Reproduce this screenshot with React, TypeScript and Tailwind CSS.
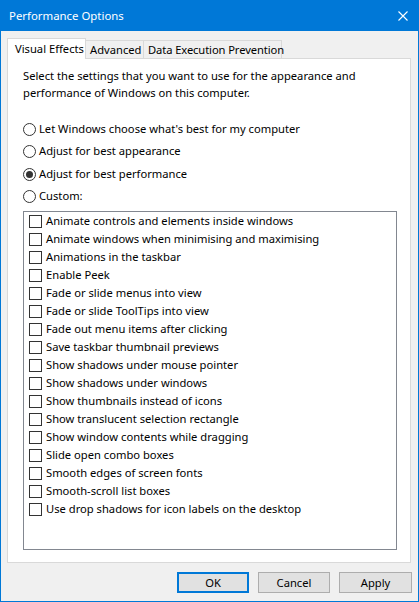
import React, { useState } from 'react';

const effects = [
  'Animate controls and elements inside windows',
  'Animate windows when minimising and maximising',
  'Animations in the taskbar',
  'Enable Peek',
  'Fade or slide menus into view',
  'Fade or slide ToolTips into view',
  'Fade out menu items after clicking',
  'Save taskbar thumbnail previews',
  'Show shadows under mouse pointer',
  'Show shadows under windows',
  'Show thumbnails instead of icons',
  'Show translucent selection rectangle',
  'Show window contents while dragging',
  'Slide open combo boxes',
  'Smooth edges of screen fonts',
  'Smooth-scroll list boxes',
  'Use drop shadows for icon labels on the desktop',
];

const radios = [
  "Let Windows choose what's best for my computer",
  'Adjust for best appearance',
  'Adjust for best performance',
  'Custom:',
];

const Radio: React.FC<{ checked: boolean; label: string; onClick: () => void }> = ({ checked, label, onClick }) => (
  <div className="flex items-center h-[22.5px] cursor-default" onClick={onClick}>
    <span className="w-[13px] h-[13px] rounded-full border border-[#333333] bg-white flex items-center justify-center shrink-0">
      {checked && <span className="w-[7px] h-[7px] rounded-full bg-[#333333]" />}
    </span>
    <span className="ml-[3px]">{label}</span>
  </div>
);

export default function App() {
  const [mode, setMode] = useState(2);
  const [checked, setChecked] = useState<boolean[]>(effects.map(() => false));

  return (
    <div
      className="w-[419px] h-[602px] flex flex-col bg-[#f0f0f0] border border-t-0 border-[#0078d7] text-[11.2px] text-black select-none whitespace-nowrap"
      style={{ fontFamily: '"Noto Sans", "Open Sans", sans-serif' }}
    >
      {/* Title bar */}
      <div className="h-[31px] bg-[#0078d7] -mx-px flex items-center justify-between pl-[9px] pr-[11px] text-white shrink-0">
        <span className="text-[11.4px]">Performance Options</span>
        <svg width="10" height="10" viewBox="0 0 10 10">
          <path d="M0.5 0.5L9.5 9.5M9.5 0.5L0.5 9.5" stroke="white" strokeWidth="1.1" />
        </svg>
      </div>

      {/* Tabs */}
      <div className="mt-[7px] mx-[6px] flex items-end h-[20px] relative z-10">
        <div className="h-[21px] w-[79px] bg-white border border-b-0 border-[#d9d9d9] pl-[7px] pt-[2px] leading-[16px] -mb-px">
          Visual Effects
        </div>
        <div className="h-[18px] w-[58px] border border-l-0 border-b-0 border-[#d9d9d9] pl-[4px] pt-[1px] leading-[16px]">
          Advanced
        </div>
        <div className="h-[18px] w-[138px] border border-l-0 border-b-0 border-[#d9d9d9] pl-[4px] pt-[1px] leading-[16px] tracking-[-0.1px]">
          Data Execution Prevention
        </div>
      </div>

      {/* Panel */}
      <div className="mx-[6px] h-[505px] w-[404px] bg-white border border-[#d9d9d9] pl-[15px] pr-[13px] pt-[8px] flex flex-col">
        <p className="leading-[17px]">
          Select the settings that you want to use for the appearance and
          <br />
          performance of Windows on this computer.
        </p>
        <div className="mt-[17px]">
          {radios.map((r, i) => (
            <Radio key={r} label={r} checked={mode === i} onClick={() => setMode(i)} />
          ))}
        </div>
        <div className="mt-[3px] h-[339px] border border-[#828790] pl-[5px]">
          {effects.map((e, i) => (
            <div
              key={e}
              className="flex items-center h-[18px]"
              onClick={() => setChecked(checked.map((c, j) => (j === i ? !c : c)))}
            >
              <span className="w-[13px] h-[13px] border border-[#333333] bg-white shrink-0 flex items-center justify-center">
                {checked[i] && (
                  <svg width="9" height="9" viewBox="0 0 9 9">
                    <path d="M1 4.5L3.5 7L8 1.5" stroke="#333" strokeWidth="1.2" fill="none" />
                  </svg>
                )}
              </span>
              <span className="ml-[4px]">{e}</span>
            </div>
          ))}
        </div>
      </div>

      {/* Buttons */}
      <div className="flex justify-end gap-[9px] mt-[9px] pr-[6px]">
        <button className="w-[72px] h-[21px] bg-[#e1e1e1] border-2 border-[#0078d7] leading-none">OK</button>
        <button className="w-[72px] h-[21px] bg-[#e1e1e1] border border-[#adadad] leading-none">Cancel</button>
        <button className="w-[73px] h-[21px] bg-[#e1e1e1] border border-[#adadad] leading-none">Apply</button>
      </div>
    </div>
  );
}
